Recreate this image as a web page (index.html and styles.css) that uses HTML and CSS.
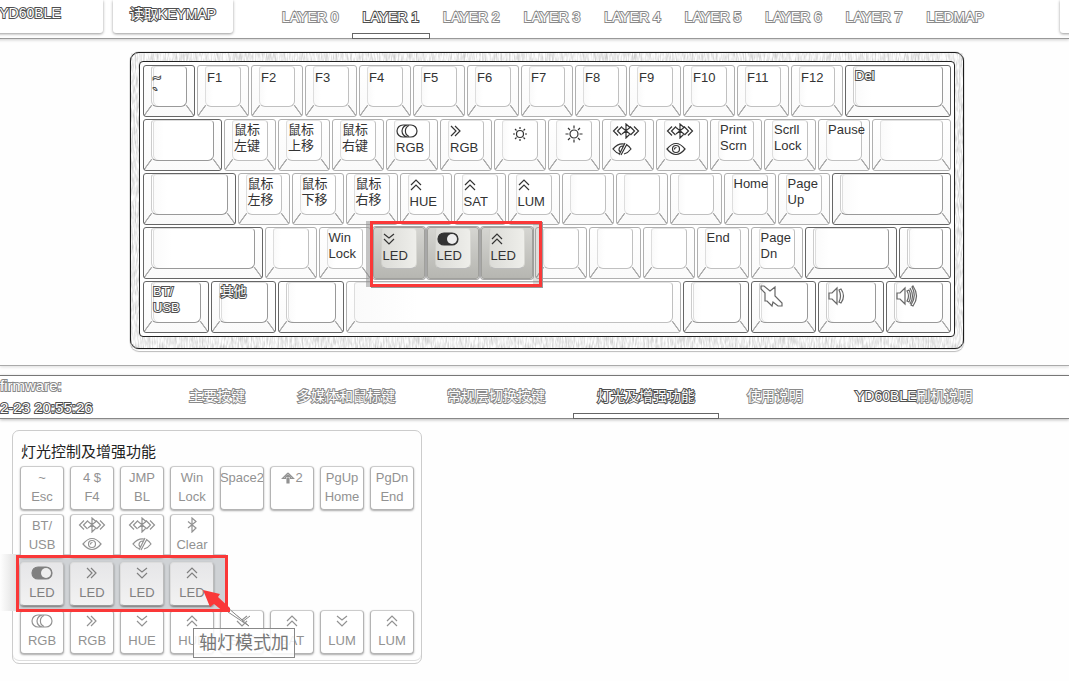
FILE: index.html
```html
<!DOCTYPE html>
<html lang="zh-CN">
<head>
<meta charset="utf-8">
<title>YD60BLE KEYMAP</title>
<link rel="stylesheet" href="styles.css">
</head>
<body>
<svg class="defs" aria-hidden="true">
  <filter id="grain" x="0" y="0" width="100%" height="100%">
    <feTurbulence type="fractalNoise" baseFrequency="0.7 0.12" numOctaves="2" seed="4"/>
    <feColorMatrix values="0 0 0 0 .5  0 0 0 0 .5  0 0 0 0 .5  1.5 0 0 0 -.5"/>
  </filter>
  <symbol id="right" viewBox="0 0 20 14"><path d="M5 2l5 5-5 5M9 2l5 5-5 5"/></symbol>
  <symbol id="down" viewBox="0 0 20 14"><path d="M5 2l5 4 5-4M5 7l5 5 5-5"/></symbol>
  <symbol id="up" viewBox="0 0 20 14"><path d="M5 7l5-5 5 5M5 12l5-5 5 5"/></symbol>
  <symbol id="off" viewBox="0 0 22 14"><path d="M7 1h8a6 6 0 0 1 0 12H7A6 6 0 0 1 7 1zM12 1a6 6 0 0 0 0 12"/><path d="M13 1.500a6 6 0 0 0 0 11"/></symbol>
  <symbol id="on" viewBox="0 0 22 14"><path class="solid" d="M7 1h8a6 6 0 0 1 0 12H7A6 6 0 0 1 7 1z"/><circle class="knob" cx="15" cy="7" r="5"/></symbol>
  <symbol id="bt" viewBox="0 0 20 16"><path d="M6 4.500l8 6.500-4 4V1l4 3.500L6 11"/></symbol>
  <symbol id="btw" viewBox="0 0 28 16"><path d="M10 4.500l8 6.500-4 4V1l4 3.500L10 11M6 3.500L1.500 8 6 12.500M10 3.500L5.500 8l4 4M22 3.500L26.500 8 22 12.500M18 3.500L22.500 8l-4 4"/></symbol>
  <symbol id="eye" viewBox="0 0 20 14"><path d="M1 7q9-11 18 0Q10 18 1 7z"/><circle cx="10" cy="7" r="3.500"/><path d="M8.500 7.500q0-2 2-2"/></symbol>
  <symbol id="eyeoff" viewBox="0 0 20 14"><path d="M8 12Q4 11 1 7q5-6 11-5M12 12q4-1 7-5-2-3-4-4M13 1L7 13M15 2L9 13M11 4Q7 4 7 8l1 2"/></symbol>
  <symbol id="sun" viewBox="0 0 20 20"><circle cx="10" cy="10" r="3.500"/><path d="M10 3v2M10 15v2M3 10h2M15 10h2M5 5l1.500 1.500M13.500 13.500L15 15M5 15l1.500-1.500M13.500 6.500L15 5"/></symbol>
  <symbol id="sunbig" viewBox="0 0 20 20"><circle cx="10" cy="10" r="4"/><path d="M10 1.500v3M10 15.500v3M1.500 10h3M15.500 10h3M4 4l2 2M14 14l2 2M4 16l2-2M14 6l2-2"/></symbol>
  <symbol id="mute" viewBox="0 0 24 24"><path d="M2 2h3l6 5 5-4v9l7 7v3h-4l-5-4-1 4-5-5H6V9L2 5z"/></symbol>
  <symbol id="vol" viewBox="0 0 24 24"><path d="M3 9h3l5-5v16l-5-5H3zM13 6l2-1q5 7 0 14l-2-1q3-6 0-12z"/></symbol>
  <symbol id="volup" viewBox="0 0 24 24"><path d="M3 9h3l5-5v16l-5-5H3zM13 7q3 5 0 10l2 1q3-6 0-12zM16 4q5 8 0 16M18 3l1-1q7 10 0 20l-2-1q6-9 1-18z"/></symbol>
  <symbol id="shift" viewBox="0 0 14 14"><path d="M7 2L1.500 7.500H5M7 2l5.500 5.500H9M7 4L4 7M7 4l3 3M6 7v5h2V7M7 5v7"/></symbol>
</svg>

<header class="topbar">
  <button class="device outlined" type="button">YD60BLE</button>
  <button class="read outlined" type="button">读取KEYMAP</button>
  <nav class="layers" aria-label="Layers">
    <a class="outlined" href="#l0">LAYER 0</a>
    <a class="outlined current" href="#l1" aria-current="page">LAYER 1</a>
    <a class="outlined" href="#l2">LAYER 2</a>
    <a class="outlined" href="#l3">LAYER 3</a>
    <a class="outlined" href="#l4">LAYER 4</a>
    <a class="outlined" href="#l5">LAYER 5</a>
    <a class="outlined" href="#l6">LAYER 6</a>
    <a class="outlined" href="#l7">LAYER 7</a>
    <a class="outlined" href="#led">LEDMAP</a>
  </nav>
  <button class="more" type="button" aria-label="More"></button>
</header>

<main>
<section class="stage">
  <div class="board">
    <svg class="grain" aria-hidden="true"><rect width="100%" height="100%" filter="url(#grain)"/></svg>
    <div class="plate">
      <div class="row row-fn">
        <button class="key mod outlined">~&#10;`</button>
        <button class="key">F1</button><button class="key">F2</button><button class="key">F3</button><button class="key">F4</button><button class="key">F5</button><button class="key">F6</button><button class="key">F7</button><button class="key">F8</button><button class="key">F9</button><button class="key">F10</button><button class="key">F11</button><button class="key">F12</button>
        <button class="key mod u8 outlined">Del</button>
      </div>
      <div class="row">
        <button class="key mod u6" aria-label="blank"></button>
        <button class="key">鼠标&#10;左键</button><button class="key">鼠标&#10;上移</button><button class="key">鼠标&#10;右键</button>
        <button class="key"><svg class="ico w22"><use href="#off"/></svg>RGB</button>
        <button class="key"><svg class="ico shift-left"><use href="#right"/></svg>RGB</button>
        <button class="key" aria-label="dim"><svg class="sun"><use href="#sun"/></svg></button>
        <button class="key" aria-label="bright"><svg class="sun"><use href="#sunbig"/></svg></button>
        <button class="key" aria-label="hide bluetooth"><svg class="ico w28"><use href="#btw"/></svg><svg class="ico"><use href="#eyeoff"/></svg></button>
        <button class="key" aria-label="show bluetooth"><svg class="ico w28"><use href="#btw"/></svg><svg class="ico"><use href="#eye"/></svg></button>
        <button class="key">Print&#10;Scrn</button><button class="key">Scrll&#10;Lock</button><button class="key">Pause</button>
        <button class="key u6" aria-label="blank"></button>
      </div>
      <div class="row">
        <button class="key mod u7" aria-label="blank"></button>
        <button class="key">鼠标&#10;左移</button><button class="key">鼠标&#10;下移</button><button class="key">鼠标&#10;右移</button>
        <button class="key"><svg class="ico shift-left"><use href="#up"/></svg>HUE</button>
        <button class="key"><svg class="ico shift-left"><use href="#up"/></svg>SAT</button>
        <button class="key"><svg class="ico shift-left"><use href="#up"/></svg>LUM</button>
        <button class="key" aria-label="blank"></button><button class="key" aria-label="blank"></button><button class="key" aria-label="blank"></button>
        <button class="key">Home</button><button class="key">Page&#10;Up</button>
        <button class="key mod u9" aria-label="blank"></button>
      </div>
      <div class="row">
        <button class="key mod u9" aria-label="blank"></button>
        <button class="key" aria-label="blank"></button><button class="key">Win&#10;Lock</button>
        <button class="key lit"><svg class="ico shift-left"><use href="#down"/></svg>LED<span class="frame"></span></button>
        <button class="key lit"><svg class="ico w22"><use href="#on"/></svg>LED</button>
        <button class="key lit"><svg class="ico shift-left"><use href="#up"/></svg>LED</button>
        <button class="key" aria-label="blank"></button><button class="key" aria-label="blank"></button><button class="key" aria-label="blank"></button>
        <button class="key">End</button><button class="key">Page&#10;Dn</button>
        <button class="key mod u7" aria-label="blank"></button><button class="key mod" aria-label="blank"></button>
      </div>
      <div class="row">
        <button class="key mod u5 outlined">BT/&#10;USB</button><button class="key mod u5 outlined">其他</button><button class="key mod u5" aria-label="blank"></button>
        <button class="key u25" aria-label="space"></button>
        <button class="key mod u5" aria-label="blank"></button>
        <button class="key mod u5" aria-label="mute"><svg class="audio"><use href="#mute"/></svg></button>
        <button class="key mod u5" aria-label="volume down"><svg class="audio"><use href="#vol"/></svg></button>
        <button class="key mod u5" aria-label="volume up"><svg class="audio"><use href="#volup"/></svg></button>
      </div>
    </div>
  </div>
</section>

<div class="midbar">
  <p class="firmware"><span class="outlined">firmware:</span><br><span class="outlined strong">2-23 20:55:26</span></p>
  <nav class="groups" aria-label="Key groups">
    <a class="outlined" href="#g1">主要按键</a>
    <a class="outlined" href="#g2">多媒体和鼠标键</a>
    <a class="outlined" href="#g3">常规层切换按键</a>
    <a class="outlined current" href="#g4" aria-current="page">灯光及增强功能</a>
    <a class="outlined" href="#g5">使用说明</a>
    <a class="outlined" href="#g6"><span class="strong">YD60BLE</span>刷机说明</a>
  </nav>
</div>

<section class="panel">
  <h2>灯光控制及增强功能</h2>
  <div class="caps">
    <span class="band"></span>
    <button class="cap">~&#10;Esc</button><button class="cap">4 $&#10;F4</button><button class="cap">JMP&#10;BL</button><button class="cap">Win&#10;Lock</button><button class="cap">Space2</button><button class="cap"><span><svg class="arrow"><use href="#shift"/></svg>2</span></button><button class="cap">PgUp&#10;Home</button><button class="cap">PgDn&#10;End</button>
    <button class="cap">BT/&#10;USB</button>
    <button class="cap" aria-label="show bluetooth"><svg class="ico w28"><use href="#btw"/></svg><svg class="ico"><use href="#eye"/></svg></button>
    <button class="cap" aria-label="hide bluetooth"><svg class="ico w28"><use href="#btw"/></svg><svg class="ico"><use href="#eyeoff"/></svg></button>
    <button class="cap"><svg class="ico tall"><use href="#bt"/></svg>Clear</button>
    <button class="cap picked first"><svg class="ico w22"><use href="#on"/></svg>LED</button>
    <button class="cap picked"><svg class="ico"><use href="#right"/></svg>LED</button>
    <button class="cap picked"><svg class="ico"><use href="#down"/></svg>LED</button>
    <button class="cap picked"><svg class="ico"><use href="#up"/></svg>LED</button>
    <button class="cap first"><svg class="ico w22"><use href="#off"/></svg>RGB</button>
    <button class="cap"><svg class="ico"><use href="#right"/></svg>RGB</button>
    <button class="cap"><svg class="ico"><use href="#down"/></svg>HUE</button>
    <button class="cap"><svg class="ico"><use href="#up"/></svg>HUE</button>
    <button class="cap"><svg class="ico"><use href="#down"/></svg>SAT</button>
    <button class="cap"><svg class="ico"><use href="#up"/></svg>SAT</button>
    <button class="cap"><svg class="ico"><use href="#down"/></svg>LUM</button>
    <button class="cap"><svg class="ico"><use href="#up"/></svg>LUM</button>
    <span class="ring"></span>
    <span class="tip" role="tooltip">轴灯模式加</span>
    <svg class="pointer" viewBox="0 0 50 40" aria-hidden="true"><path class="tail" d="M25 17L47 36 26 22M40 32l8-6"/><path class="head" d="M1 0l17 4-2 3 12 11v4h-6l-10-8-4 3z"/></svg>
  </div>
</section>
</main>
</body>
</html>
```

FILE: styles.css
```css
* { box-sizing: border-box; }

body {
  margin: 0;
  min-height: 100vh;
  overflow-x: hidden;
  background: #fefefe;
  color: #333;
  font-family: "Liberation Sans", "Noto Sans CJK SC", sans-serif;
  font-size: 14px;
}

button {
  margin: 0;
  padding: 0;
  border: 0;
  background: none;
  color: inherit;
  font: inherit;
}

a { text-decoration: none; }

.defs { position: absolute; width: 0; height: 0; }

.outlined {
  color: #fff;
  -webkit-text-stroke: 2px #8a8a8a;
  paint-order: stroke fill;
}
.current,
.strong { -webkit-text-stroke-color: #505050; }

/* top bar */
.topbar {
  display: flex;
  align-items: stretch;
  height: 39px;
  margin-left: -43px;
  border-bottom: 1px solid #8c8c8c;
  background: #fff;
  box-shadow: 0 1px 3px #ccc;
}
.device,
.read,
.more {
  flex: none;
  height: 33px;
  padding-bottom: 7px;
  border-radius: 0 0 3px 3px;
  background: #fff;
  box-shadow: 0 1px 3px #999;
  -webkit-text-stroke-color: #505050;
}
.device { width: 146px; }
.read { width: 120px; margin-left: 10px; }
.more { width: 40px; margin: 0 -31px 0 auto; }

.layers {
  display: flex;
  gap: 2px;
  margin-left: 38px;
}
.layers a {
  position: relative;
  padding: 0 11px;
  line-height: 35px;
  white-space: nowrap;
}
.layers .current::after,
.groups .current::after {
  content: "";
  position: absolute;
  right: 0;
  bottom: -1px;
  left: 0;
  height: 4px;
  border: 1px solid #666;
  background: #fff;
}

/* keyboard */
.stage {
  padding: 13px 0 16px 25px;
  border-bottom: 1px solid #aaa;
  box-shadow: 0 1px 3px #ddd;
}
.board {
  position: relative;
  max-width: 834px;
  margin: 0 auto;
  padding: 8px 8px 11px;
  border: 1px solid #1c1c1c;
  border-radius: 9px;
  background: #fdfdfd;
  box-shadow: 0 0 1px #333, 0 2px 0 #fff, 0 3px 1px #bbb;
}
.grain {
  position: absolute;
  inset: 0;
  width: 100%;
  height: 100%;
}
.plate {
  position: relative;
  padding: 2px;
  border: 1px solid #222;
  border-radius: 4px;
  background: #fff;
}
.row {
  display: grid;
  grid-template-columns: repeat(60, 1fr);
  height: 54px;
}
.key {
  position: relative;
  z-index: 0;
  display: flex;
  flex-direction: column;
  align-items: flex-start;
  justify-content: flex-start;
  grid-column: span 4;
  min-width: 0;
  margin: 1px;
  padding: 2px 0 0 9px;
  border: 1px solid #b0b0b0;
  border-radius: 3px;
  background:
    linear-gradient(to top left, transparent 44%, #aaa 48%, #aaa 54%, transparent 58%) left bottom / 8px 11px no-repeat,
    linear-gradient(to top right, transparent 44%, #aaa 48%, #aaa 54%, transparent 58%) right bottom / 8px 11px no-repeat,
    linear-gradient(#fff, #fafafa);
  font-size: 13px;
  line-height: 16px;
  text-align: left;
  white-space: pre;
}
.key::before {
  content: "";
  position: absolute;
  inset: 0 7px 9px;
  z-index: -1;
  border: 1px solid #c0c0c0;
  border-top-color: #e2e2e2;
  border-left-color: #ddd;
  border-radius: 3px 4px 6px 6px;
  background: linear-gradient(90deg, #fafafa, #fff 20%);
}
.mod { border-color: #666; }
.mod::before {
  border-color: #ddd #999 #999 #ccc;
  box-shadow: inset 1px 0 0 #fff, inset 2px 0 0 #ddd;
}
.key.outlined { -webkit-text-stroke-color: #505050; }
.row-fn .key:not(.u8) { padding-top: 4px; }

.u5 { grid-column: span 5; }
.u6 { grid-column: span 6; }
.u7 { grid-column: span 7; }
.u8 { grid-column: span 8; }
.u9 { grid-column: span 9; }
.u25 { grid-column: span 25; }

.lit {
  border-color: #a0a09c;
  background: linear-gradient(#d5d5d1, #b6b6b1);
  box-shadow: 0 0 0 1px #a8a8a8;
}
.lit::before {
  border-color: #ddddd8 #d8d8d3 #bbb #d0d0cb;
  background: linear-gradient(90deg, #dcdcd8, #eeeeea);
}
.lit:has(.frame) { z-index: 2; }
.frame {
  position: absolute;
  top: -7px;
  left: -4px;
  width: 172px;
  height: 66px;
  border: 3px solid #fa3838;
  background: linear-gradient(90deg, transparent 160px, rgba(130, 130, 120, .25) 160px);
  box-shadow: -4px 0 0 rgba(140, 140, 140, .5), 1px 1px 0 #999;
}

/* icons */
.ico,
.sun,
.audio,
.arrow {
  flex: none;
  fill: none;
  stroke: currentColor;
  stroke-width: 1.2px;
}
.ico {
  width: 20px;
  height: 14px;
  margin: 2px 0;
}
.shift-left { margin-left: -4px; }
.w22 { width: 22px; }
.w28 { width: 28px; height: 16px; margin: 1px 0; }
.tall { height: 16px; }
.sun { width: 20px; height: 20px; margin: 2px 0 0 6px; }
.audio { width: 24px; height: 24px; margin-left: -2px; stroke: #666; }
.arrow { width: 14px; height: 14px; vertical-align: -3px; }
.solid { fill: currentColor; }
.knob { fill: #eee; stroke: none; }

/* middle bar */
.midbar {
  display: flex;
  align-items: stretch;
  height: 44px;
  margin-top: 9px;
  border-top: 1px solid #777;
  border-bottom: 1px solid #888;
  background: #fff;
  box-shadow: 0 1px 3px #bbb;
}
.firmware {
  flex: none;
  width: 165px;
  margin: 0;
  margin-top: -1px;
  font-size: 15px;
  line-height: 22px;
}
.groups { display: flex; gap: 4px; }
.groups a {
  position: relative;
  padding: 0 24px;
  line-height: 41px;
  white-space: nowrap;
}

/* key panel */
.panel {
  max-width: 410px;
  margin: 11px 12px 0;
  padding: 11px 7px 9px;
  border: 1px solid #ccc;
  border-radius: 7px;
  box-shadow: inset 0 -2px 0 #fff, inset 0 -3px 0 #ddd;
}
.panel h2 {
  margin: 0 0 4px 1px;
  color: #222;
  font-size: 15px;
  font-weight: 400;
  line-height: 20px;
}
.caps {
  position: relative;
  display: grid;
  grid-template-columns: repeat(8, 1fr);
  grid-auto-rows: 44px;
  gap: 4px 6px;
}
.cap {
  position: relative;
  display: flex;
  flex-direction: column;
  align-items: center;
  justify-content: flex-start;
  min-width: 0;
  padding-top: 1px;
  border: 1px solid #b4b4b4;
  border-top-color: #ccc;
  border-radius: 4px;
  background: #fff;
  box-shadow: 0 1px 2px #aaa;
  color: #929292;
  font-size: 13px;
  line-height: 19px;
  text-align: center;
  white-space: pre;
  overflow: hidden;
}
.cap .ico { margin: 2px 0 3px; }
.cap .w28,
.cap .tall { margin: 1px 0 2px; }
.first { grid-column: 1; }
.picked {
  border-color: #ddd #bbb #999 #ddd;
  background: linear-gradient(#e6e6e8, #f2f2f2);
  box-shadow: 0 1px 2px #777;
  color: #808080;
}
.band {
  position: absolute;
  top: 88px;
  left: -20px;
  width: 226px;
  height: 57px;
  background: linear-gradient(90deg, #fefefe, #ddd 18px, #cfd2d5 20px);
}
.ring {
  position: absolute;
  top: 89px;
  left: -4px;
  width: 212px;
  height: 57px;
  border: 3px solid #fa3838;
}
.tip {
  position: absolute;
  top: 162px;
  left: 173px;
  padding: 0 5px;
  border: 1px solid #888;
  background: rgba(255, 255, 255, .85);
  color: #777;
  font-size: 18px;
  line-height: 28px;
  white-space: nowrap;
}
.pointer {
  position: absolute;
  top: 124px;
  left: 182px;
  width: 50px;
  height: 40px;
}
.tail { fill: #fff; stroke: #888; }
.head { fill: #fa3838; }
```
